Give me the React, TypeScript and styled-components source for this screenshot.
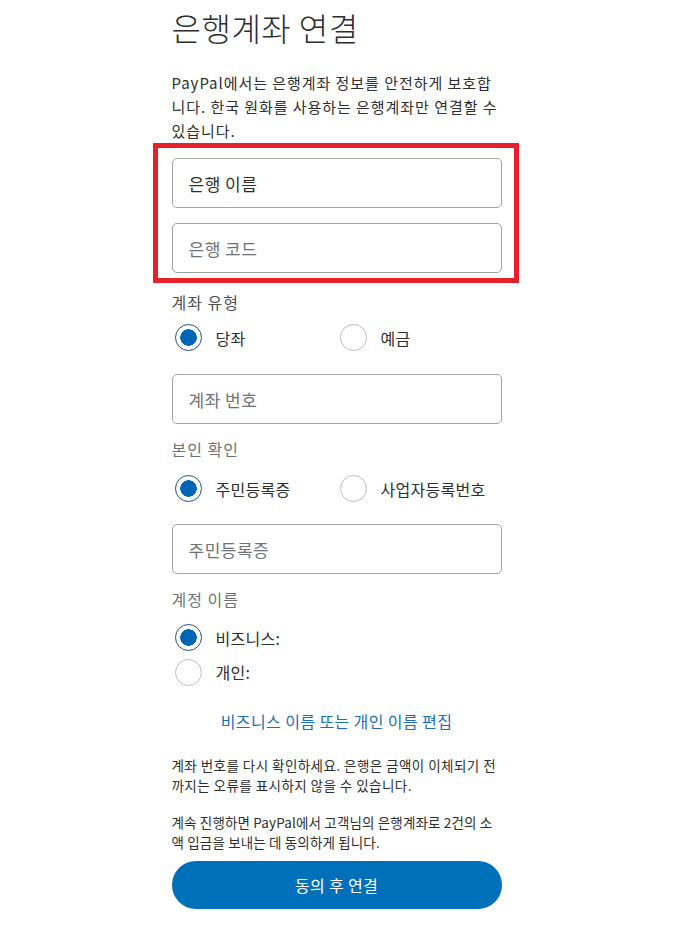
import React from 'react';
import styled, {createGlobalStyle} from 'styled-components';

const GlobalStyle = createGlobalStyle`
    body {
        margin: 0;
        background: #ffffff;
        font-family: "Noto Sans CJK KR", "Liberation Sans", sans-serif;
        color: #2c2e2f;
    }
`

type Choice = { label: string, checked?: boolean }

const RadioItem = ({label, checked}: Choice) => (
    <RadioLabel>
        <RadioCircle $checked={!!checked}/>
        <span>{label}</span>
    </RadioLabel>
)

export default function App() {
    return (
        <Page>
            <GlobalStyle/>
            <Column>
                <Title>은행계좌 연결</Title>
                <Intro>
                    PayPal에서는 은행계좌 정보를 안전하게 보호합니다. 한국 원화를 사용하는 은행계좌만 연결할 수 있습니다.
                </Intro>

                <Highlight>
                    <Field $filled>은행 이름</Field>
                    <Field>은행 코드</Field>
                </Highlight>

                <GroupLabel>계좌 유형</GroupLabel>
                <RadioRow $gap={12}>
                    <RadioItem label="당좌" checked/>
                    <RadioItem label="예금"/>
                </RadioRow>
                <Field $gap={23}>계좌 번호</Field>

                <GroupLabel $light>본인 확인</GroupLabel>
                <RadioRow $gap={16}>
                    <RadioItem label="주민등록증" checked/>
                    <RadioItem label="사업자등록번호"/>
                </RadioRow>
                <Field $gap={22}>주민등록증</Field>

                <GroupLabel $light>계정 이름</GroupLabel>
                <RadioStack>
                    <RadioItem label="비즈니스:" checked/>
                    <RadioItem label="개인:"/>
                </RadioStack>

                <EditLink>비즈니스 이름 또는 개인 이름 편집</EditLink>

                <Note $spacing={0.45}>
                    계좌 번호를 다시 확인하세요. 은행은 금액이 이체되기 전까지는 오류를 표시하지 않을 수 있습니다.
                </Note>
                <Note $gap={17} $spacing={0.15}>
                    계속 진행하면 PayPal에서 고객님의 은행계좌로 2건의 소액 입금을 보내는 데 동의하게 됩니다.
                </Note>

                <Submit>동의 후 연결</Submit>
            </Column>
        </Page>
    );
}

const Page = styled.main`
    padding: 7px 0 20px;
`

const Column = styled.div`
    width: 330px;
    margin: 0 auto;
    display: flex;
    flex-direction: column;
`

const Title = styled.h1`
    margin: 0;
    font-size: 32px;
    font-weight: 300;
    line-height: 40px;
    letter-spacing: 0.5px;
    color: #2c2e2f;
`

const Intro = styled.p`
    margin: 24px 0 0;
    font-size: 15px;
    line-height: 24px;
    letter-spacing: 0.95px;
    color: #2c2e2f;
`

const Highlight = styled.div`
    margin: 0 -17px 0 -19px;
    border: 5px solid #e8202a;
    padding: 10px 12px 5px 14px;
    display: flex;
    flex-direction: column;
    gap: 15px;
`

const Field = styled.div<{ $filled?: boolean, $gap?: number }>`
    height: 50px;
    box-sizing: border-box;
    margin-top: ${p => p.$gap ?? 0}px;
    border: 1px solid #9da3a6;
    border-radius: 5px;
    padding: 0 16px;
    display: flex;
    align-items: center;
    font-size: 17px;
    letter-spacing: 0.5px;
    color: ${p => p.$filled ? '#2c2e2f' : '#6c7378'};
`

const GroupLabel = styled.div<{ $light?: boolean }>`
    margin-top: ${p => p.$light ? 15 : 9}px;
    font-size: 16px;
    line-height: 20px;
    letter-spacing: 1px;
    color: ${p => p.$light ? '#6c7378' : '#4a4f53'};
`

const RadioRow = styled.div<{ $gap: number }>`
    margin-top: ${p => p.$gap}px;
    display: grid;
    grid-template-columns: 165px 1fr;
    padding-left: 3px;
`

const RadioStack = styled.div`
    margin-top: 15px;
    display: flex;
    flex-direction: column;
    gap: 7.5px;
    padding-left: 3px;
`

const RadioLabel = styled.label`
    display: flex;
    align-items: center;
    gap: 14px;
    font-size: 16px;
    letter-spacing: 0.3px;
    color: #2c2e2f;
`

const RadioCircle = styled.span<{ $checked: boolean }>`
    width: 27px;
    height: 27px;
    box-sizing: border-box;
    border-radius: 50%;
    border: ${p => p.$checked ? '1.5px solid #1d4f82' : '1px solid #b7bcbf'};
    background: ${p => p.$checked ? 'radial-gradient(circle, #0065b3 0 8px, #ffffff 8.5px)' : '#ffffff'};
    flex-shrink: 0;
`

const EditLink = styled.a`
    margin-top: 23px;
    align-self: center;
    font-size: 16px;
    letter-spacing: 0.4px;
    color: #1a6fb3;
    cursor: pointer;
`

const Note = styled.p<{ $gap?: number, $spacing: number }>`
    margin: ${p => p.$gap ?? 22}px 0 0;
    font-size: 13.5px;
    line-height: 20px;
    letter-spacing: ${p => p.$spacing}px;
    color: #2c2e2f;
`

const Submit = styled.button`
    margin-top: 9px;
    height: 48px;
    border: none;
    border-radius: 24px;
    background: #0070ba;
    color: #ffffff;
    font-family: inherit;
    font-size: 16px;
    letter-spacing: 0.3px;
    cursor: pointer;
`
